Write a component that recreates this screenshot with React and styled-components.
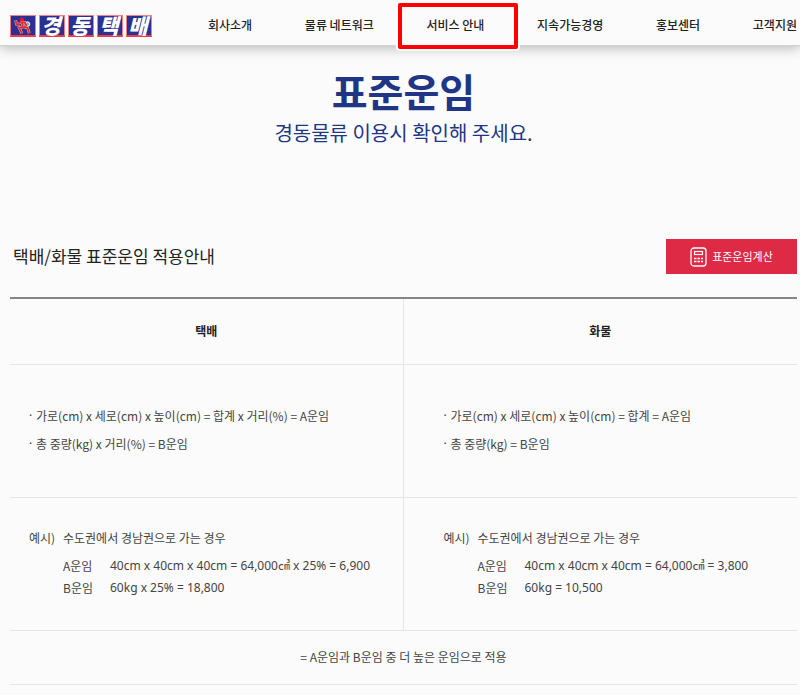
import React from "react";
import styled, { createGlobalStyle } from "styled-components";

const GlobalStyle = createGlobalStyle`
  *, *::before, *::after { box-sizing: border-box; }
  body {
    margin: 0;
    background: #fbfbfb;
    color: #444;
    font: 12px/22px "Noto Sans CJK KR", sans-serif;
  }
`;

const Header = styled.header`
  display: flex;
  align-items: center;
  gap: 56px;
  height: 46px;
  padding: 0 3px 0 10px;
  background: #fbfbfb;
  border-bottom: 1px solid #d2d2d2;
  box-shadow: 0 2px 12px rgba(0, 0, 0, 0.28);
`;

const Logo = styled.a`
  display: flex;
  flex: none;
  gap: 3px;
  margin-top: 6px;
  text-decoration: none;
`;

const Tile = styled.span`
  display: flex;
  align-items: center;
  justify-content: center;
  width: 26px;
  height: 22px;
  padding-right: 2px;
  background: #2b3190;
  border: 1px solid #f08088;
  border-bottom: 2px solid #ee3c4c;
  color: #fff;
  font: italic 900 21px/20px "Noto Sans CJK KR", sans-serif;
`;

const Nav = styled.nav`
  display: flex;
  flex: 1;
  justify-content: space-between;
  padding-top: 4px;
`;

const NavLink = styled.a`
  position: relative;
  color: #222;
  font: 500 12px/22px "Noto Sans CJK KR", sans-serif;
  text-decoration: none;
  white-space: nowrap;
`;

const Highlight = styled.span`
  position: absolute;
  inset: -11px -34px -13px -28px;
  border: 4px solid #fe0000;
  border-radius: 2px;
  box-shadow: 0 0 0 2px #fff;
  pointer-events: none;
`;

const Main = styled.main`
  padding: 15px 3px 10px 10px;
`;

const Hero = styled.div`
  color: #213585;
  text-align: center;
`;

const Title = styled.h1`
  margin: 0;
  font-size: 39px;
  font-weight: 700;
  line-height: 58px;
`;

const Subtitle = styled.p`
  margin: 0;
  font-size: 20px;
  font-weight: 400;
  line-height: 28px;
`;

const SectionBar = styled.div`
  display: flex;
  align-items: center;
  justify-content: space-between;
  margin: 92px 0 23px;
  padding-left: 3px;
`;

const SectionTitle = styled.h2`
  margin: 0;
  padding-bottom: 2px;
  color: #222;
  font-size: 17px;
  font-weight: 400;
  line-height: 24px;
`;

const CalcButton = styled.button`
  display: flex;
  align-items: center;
  justify-content: center;
  gap: 5px;
  width: 131px;
  height: 35px;
  padding: 0;
  border: 0;
  background: #de2a44;
  color: #fff;
  font: 400 11px/22px "Noto Sans CJK KR", sans-serif;
  cursor: pointer;
`;

const ButtonLabel = styled.span`
  padding-bottom: 2px;
`;

const FareTable = styled.table`
  width: 100%;
  table-layout: fixed;
  border-collapse: separate;
  border-spacing: 0;
  border-top: 2px solid #858585;
`;

const HeadCell = styled.th`
  height: 66px;
  padding: 0 0 2px;
  border-bottom: 1px solid #e6e6e6;
  border-right: 1px solid #e6e6e6;
  color: #222;
  font-weight: 700;
  &:last-child { border-right: 0; }
`;

const Cell = styled.td`
  height: 133px;
  padding: 0 0 2px 19px;
  border-bottom: 1px solid #e6e6e6;
  border-right: 1px solid #e6e6e6;
  &:last-child {
    padding-left: 40px;
    border-right: 0;
  }
`;

const NoteCell = styled.td`
  height: 54px;
  padding: 0 0 2px;
  border-bottom: 1px solid #e6e6e6;
  text-align: center;
`;

const FormulaList = styled.ul`
  margin: 0;
  padding: 0;
  list-style: none;
  line-height: 28px;
`;

const Formula = styled.li`
  display: flex;
  &::before {
    content: "·";
    width: 7px;
    font-family: "Noto Sans", sans-serif;
  }
`;

const Example = styled.div`
  display: grid;
  grid-template-columns: 34px 1fr;
  row-gap: 6px;
`;

const Fares = styled.dl`
  display: grid;
  grid-column: 2;
  grid-template-columns: 47px 1fr;
  margin: 0;
  line-height: 22px;
`;

const FareValue = styled.dd`
  margin: 0;
  font-family: "Noto Sans", "Noto Sans CJK KR", sans-serif;
  white-space: nowrap;
`;

const navItems = ["회사소개", "물류 네트워크", "서비스 안내", "지속가능경영", "홍보센터", "고객지원"];
const activeItem = "서비스 안내";

const columns = [
  {
    name: "택배",
    formulas: ["가로(cm) x 세로(cm) x 높이(cm) = 합계 x 거리(%) = A운임", "총 중량(kg) x 거리(%) = B운임"],
    fares: [["A운임", "40cm x 40cm x 40cm = 64,000㎤ x 25% = 6,900"], ["B운임", "60kg x 25% = 18,800"]],
  },
  {
    name: "화물",
    formulas: ["가로(cm) x 세로(cm) x 높이(cm) = 합계 = A운임", "총 중량(kg) = B운임"],
    fares: [["A운임", "40cm x 40cm x 40cm = 64,000㎤ = 3,800"], ["B운임", "60kg = 10,500"]],
  },
];

function RunnerIcon() {
  return (
    <svg width="24" height="19" viewBox="0 0 24 19" fill="none" aria-hidden="true">
      <circle cx="18" cy="8" r="2.5" fill="#7fa3cf" stroke="#fff" />
      <path d="M5 4L6 8h4M10 6h5l2 4M12 6l1 5M13 11L9 12l3 6M14 11l4 1 2 6" stroke="#f4b5b5" strokeWidth="3" />
      <path d="M5 4L6 8h4M10 6h5l2 4M12 6l1 5M13 11L9 12l3 6M14 11l4 1 2 6" stroke="#e32732" strokeWidth="2" />
      <circle cx="12" cy="3" r="2.2" fill="#f01420" />
    </svg>
  );
}

function CalculatorIcon() {
  return (
    <svg width="17" height="20" viewBox="0 0 17 20" fill="none" stroke="#fff" aria-hidden="true">
      <rect x="1" y="1" width="15" height="18" rx="3" strokeWidth="1.3" />
      <rect x="4.5" y="4.5" width="8" height="3" strokeWidth="1.2" />
      <path d="M4 11.5h2.5M7.5 11.5H10M11 11.5h2M4 14.5h2.5M7.5 14.5H10M11 14.5h2" strokeWidth="1.3" />
    </svg>
  );
}

export default function App() {
  return (
    <>
      <GlobalStyle />
      <Header>
        <Logo href="#" aria-label="경동택배">
          <Tile><RunnerIcon /></Tile>
          {[..."경동택배"].map((letter) => <Tile key={letter}>{letter}</Tile>)}
        </Logo>
        <Nav>
          {navItems.map((item) => (
            <NavLink href="#" key={item}>
              {item}
              {item === activeItem && <Highlight />}
            </NavLink>
          ))}
        </Nav>
      </Header>
      <Main>
        <Hero>
          <Title>표준운임</Title>
          <Subtitle>경동물류 이용시 확인해 주세요.</Subtitle>
        </Hero>
        <SectionBar>
          <SectionTitle>택배/화물 표준운임 적용안내</SectionTitle>
          <CalcButton type="button"><CalculatorIcon /><ButtonLabel>표준운임계산</ButtonLabel></CalcButton>
        </SectionBar>
        <FareTable>
          <thead>
            <tr>{columns.map((c) => <HeadCell scope="col" key={c.name}>{c.name}</HeadCell>)}</tr>
          </thead>
          <tbody>
            <tr>
              {columns.map((c) => (
                <Cell key={c.name}>
                  <FormulaList>{c.formulas.map((f) => <Formula key={f}>{f}</Formula>)}</FormulaList>
                </Cell>
              ))}
            </tr>
            <tr>
              {columns.map((c) => (
                <Cell key={c.name}>
                  <Example>
                    <span>예시)</span>
                    <span>수도권에서 경남권으로 가는 경우</span>
                    <Fares>
                      {c.fares.map(([label, value]) => (
                        <React.Fragment key={label}>
                          <dt>{label}</dt>
                          <FareValue>{value}</FareValue>
                        </React.Fragment>
                      ))}
                    </Fares>
                  </Example>
                </Cell>
              ))}
            </tr>
            <tr>
              <NoteCell colSpan={2}>= A운임과 B운임 중 더 높은 운임으로 적용</NoteCell>
            </tr>
          </tbody>
        </FareTable>
      </Main>
    </>
  );
}
